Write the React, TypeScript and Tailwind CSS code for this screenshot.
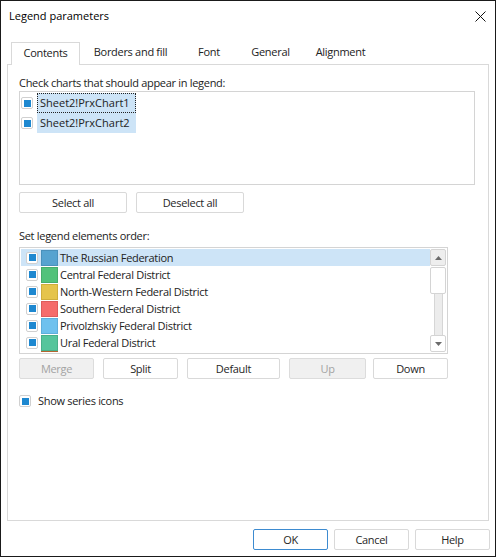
import React from 'react';

const TABS = [
  { label: 'Contents', w: 'w-[69px]', active: true },
  { label: 'Borders and fill', w: 'w-[101px]' },
  { label: 'Font', w: 'w-[56px]' },
  { label: 'General', w: 'w-[67px]' },
  { label: 'Alignment', w: 'w-[73px]' },
];

const ORDER = [
  { label: 'The Russian Federation', fill: 'bg-[#56a3d0]', edge: 'border-[#4a90bb]' },
  { label: 'Central Federal District', fill: 'bg-[#52c27b]', edge: 'border-[#46ad6b]' },
  { label: 'North-Western Federal District', fill: 'bg-[#e5c44b]', edge: 'border-[#cfae3c]' },
  { label: 'Southern Federal District', fill: 'bg-[#f56c6c]', edge: 'border-[#dd5c5c]' },
  { label: 'Privolzhskiy Federal District', fill: 'bg-[#6ec1ee]', edge: 'border-[#5eaedb]' },
  { label: 'Ural Federal District', fill: 'bg-[#55c59c]', edge: 'border-[#48b08a]' },
];

function Check() {
  return (
    <span className="flex h-[12px] w-[12px] shrink-0 items-center justify-center rounded-[2px] border border-[#d0d0d0] bg-white">
      <span className="h-[7px] w-[7px] bg-[#1e88d0]" />
    </span>
  );
}

function Btn({ children, w, disabled, focus }: { children: React.ReactNode; w: string; disabled?: boolean; focus?: boolean }) {
  return (
    <div
      className={`flex h-[21px] ${w} shrink-0 items-center justify-center rounded-[2px] border leading-[15px] ${
        disabled
          ? 'border-[#dcdcdc] bg-[#f0f0f0] text-[#a3a3a3]'
          : focus
            ? 'border-[#3d8bd0] bg-white text-[#262626]'
            : 'border-[#d9d9d9] bg-white text-[#262626]'
      }`}
    >
      <span>{children}</span>
    </div>
  );
}

function Arrow({ up }: { up?: boolean }) {
  return (
    <svg width="7" height="4" viewBox="0 0 7 4">
      <path d={up ? 'M0 4 L3.5 0 L7 4 Z' : 'M0 0 L3.5 4 L7 0 Z'} fill="#6b6b6b" />
    </svg>
  );
}

export default function App() {
  return (
    <div className="h-[558px] w-[500px] bg-white font-['Open_Sans','Noto_Sans',sans-serif] text-[11px] tracking-[-0.3px] text-[#222]">
      <div className="flex h-[557px] w-[496px] flex-col border border-[#1a1a1a]">
        <div className="flex h-[30px] items-center justify-between pl-[8px] pr-[9px]">
          <span className="text-[11px] tracking-normal text-black">Legend parameters</span>
          <svg width="11" height="11" viewBox="0 0 11 11">
            <path d="M0.5 0.5 L10.5 10.5 M10.5 0.5 L0.5 10.5" stroke="#111" strokeWidth="1" />
          </svg>
        </div>

        <div className="ml-[10px] mt-[11px] flex h-[22px] items-end">
          {TABS.map((t) =>
            t.active ? (
              <div
                key={t.label}
                className={`relative z-10 -mb-px flex h-[23px] ${t.w} items-center justify-center border border-b-0 border-[#d9d9d9] bg-white pb-[2px]`}
              >
                {t.label}
              </div>
            ) : (
              <div key={t.label} className={`flex h-[22px] ${t.w} items-center justify-center pb-[1px]`}>
                {t.label}
              </div>
            ),
          )}
        </div>

        <div className="ml-[6px] flex h-[457px] w-[482px] flex-col border border-[#d9d9d9] px-[11px] pt-[10px]">
          <div className="h-[16px] leading-[16px]">Check charts that should appear in legend:</div>
          <div className="flex h-[94px] w-[456px] flex-col border border-[#d4d4d4] px-[1px] pt-[1px]">
            {['Sheet2!PrxChart1', 'Sheet2!PrxChart2'].map((c, i) => (
              <div key={c} className="flex h-[20px] items-center gap-[4px]">
                <Check />
                <span
                  className={`flex h-[20px] w-[99px] items-center bg-[#cde4f7] px-[2px] tracking-normal ${
                    i === 0 ? 'border border-dotted border-[#222]' : 'border border-transparent'
                  }`}
                >
                  {c}
                </span>
              </div>
            ))}
          </div>

          <div className="mt-[7px] flex gap-[9px]">
            <Btn w="w-[108px]">Select all</Btn>
            <Btn w="w-[108px]">Deselect all</Btn>
          </div>

          <div className="mt-[15px] h-[16px] leading-[16px]">Set legend elements order:</div>
          <div className="mt-[3px] flex h-[107px] w-[429px] border border-[#d4d4d4] p-[1px]">
            <div className="flex w-[409px] flex-col overflow-hidden">
              {ORDER.map((r, i) => (
                <div
                  key={r.label}
                  className={`flex h-[17px] shrink-0 items-center pl-[5px] ${i === 0 ? 'bg-[#cde4f7]' : ''}`}
                >
                  <Check />
                  <span className={`ml-[3px] h-[16px] w-[17px] shrink-0 border ${r.fill} ${r.edge}`} />
                  <span className="ml-[2px] leading-[17px]">{r.label}</span>
                </div>
              ))}
              {/* next row, only its top edge shows above the list bottom */}
              <div className="flex h-[17px] shrink-0 pl-[20px]">
                <span className="h-[16px] w-[17px] shrink-0 border border-[#b36630] bg-[#c9773d]" />
              </div>
            </div>
            <div className="flex w-[16px] flex-col items-center">
              <div className="flex h-[17px] w-[16px] items-center justify-center rounded-[2px] border border-[#d4d4d4] bg-[#eeeeee]">
                <Arrow up />
              </div>
              <div className="mt-[1px] h-[27px] w-[16px] rounded-[2px] border border-[#d4d4d4] bg-white" />
              <div className="w-[9px] flex-1 border-x border-[#d6d6d6] bg-[#ececec]" />
              <div className="flex h-[17px] w-[16px] items-center justify-center rounded-[2px] border border-[#d4d4d4] bg-white">
                <Arrow />
              </div>
            </div>
          </div>

          <div className="mt-[4px] flex">
            <Btn w="w-[75px]" disabled>
              Merge
            </Btn>
            <div className="w-[9px] shrink-0" />
            <Btn w="w-[75px]">Split</Btn>
            <div className="w-[9px] shrink-0" />
            <Btn w="w-[93px]">Default</Btn>
            <div className="w-[9px] shrink-0" />
            <Btn w="w-[77px]" disabled>
              Up
            </Btn>
            <div className="w-[7px] shrink-0" />
            <Btn w="w-[75px]">Down</Btn>
          </div>

          <div className="mt-[14px] flex h-[16px] items-center gap-[7px]">
            <Check />
            <span>Show series icons</span>
          </div>
        </div>

        <div className="mt-[8px] flex justify-end gap-[6px] pr-[5px]">
          <Btn w="w-[75px]" focus>
            OK
          </Btn>
          <Btn w="w-[75px]">Cancel</Btn>
          <Btn w="w-[75px]">Help</Btn>
        </div>
      </div>
    </div>
  );
}
